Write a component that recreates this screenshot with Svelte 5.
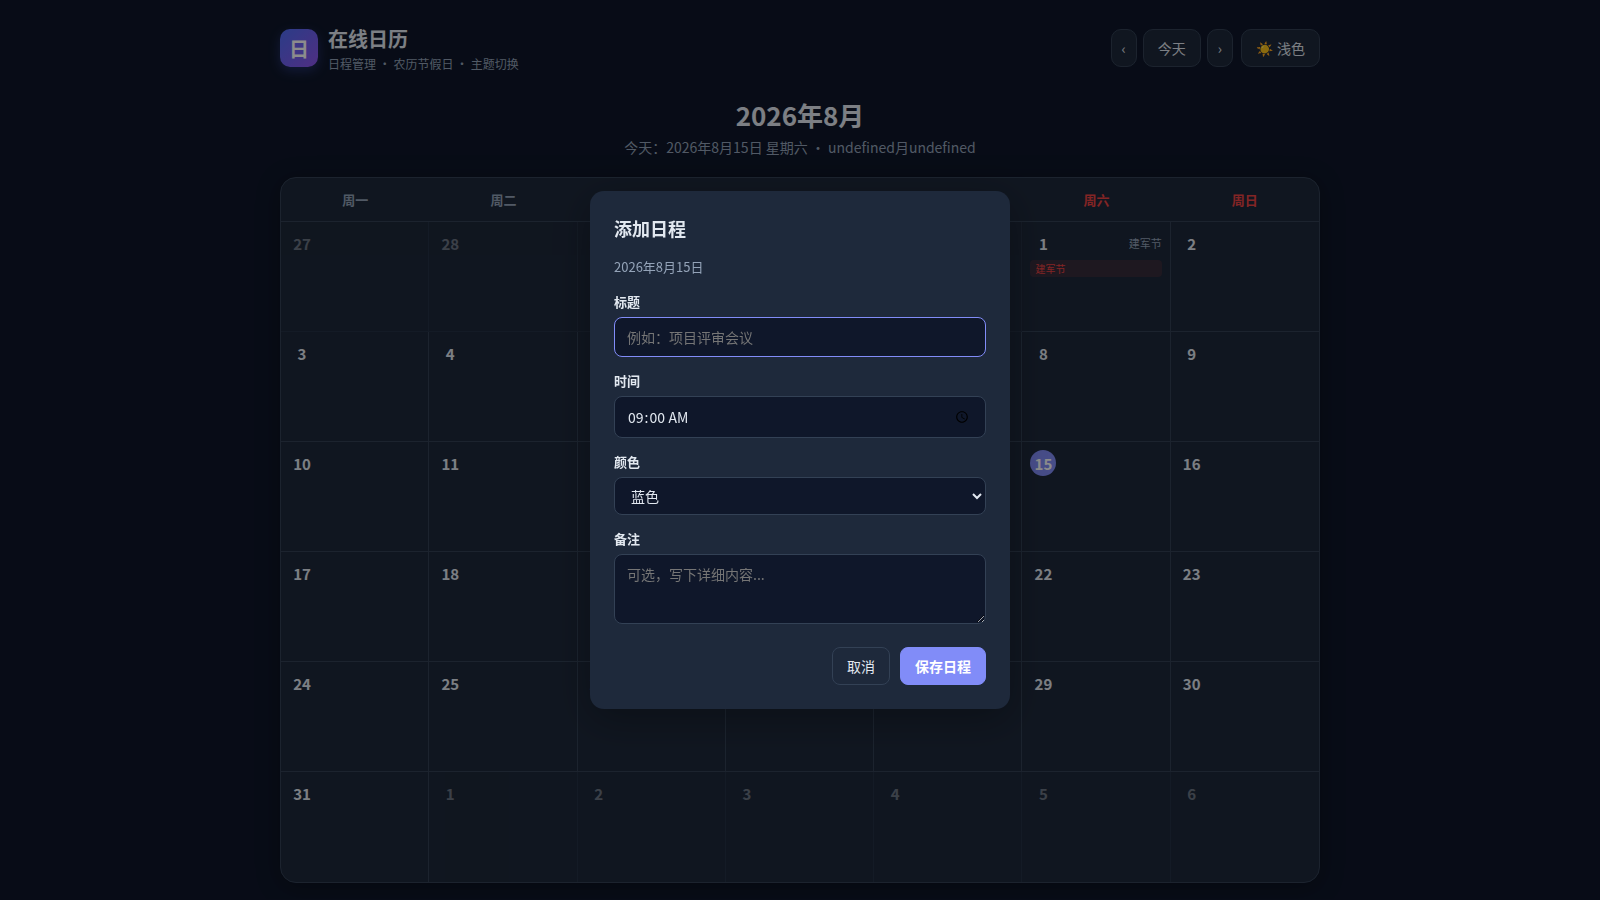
<script lang="ts">
  interface Day {
    date: number;
    month: number;
    outside: boolean;
    today: boolean;
    holiday?: string;
  }

  const weekdays = ["周一", "周二", "周三", "周四", "周五", "周六", "周日"];
  const holidays: Record<string, string> = { "8-1": "建军节" };
  const colors = [
    { value: "blue", label: "蓝色" },
    { value: "green", label: "绿色" },
    { value: "orange", label: "橙色" },
    { value: "red", label: "红色" },
  ];

  const year = 2026;
  const month = 8;
  const today = 15;

  const buildDays = (): Day[] => {
    const offset = (new Date(year, month - 1, 1).getDay() + 6) % 7;
    return Array.from({ length: 42 }, (_, i) => {
      const d = new Date(year, month - 1, 1 - offset + i);
      const m = d.getMonth() + 1;
      return {
        date: d.getDate(),
        month: m,
        outside: m !== month,
        today: m === month && d.getDate() === today,
        holiday: holidays[`${m}-${d.getDate()}`],
      };
    });
  };

  const days = buildDays();

  let open = $state(true);
  let title = $state("");
  let time = $state("09:00");
  let color = $state("blue");
  let note = $state("");

  const close = () => (open = false);
  const focus = (node: HTMLInputElement) => node.focus();

  const save = (e: SubmitEvent) => {
    e.preventDefault();
    close();
  };
</script>

<div class="app">
  <header>
    <div class="brand">
      <div class="logo">日</div>
      <div>
        <h1>在线日历</h1>
        <p>日程管理 · 农历节假日 · 主题切换</p>
      </div>
    </div>
    <div class="actions">
      <nav>
        <button class="btn arrow" aria-label="上个月">‹</button>
        <button class="btn">今天</button>
        <button class="btn arrow" aria-label="下个月">›</button>
      </nav>
      <button class="btn theme"><span>☀️</span>浅色</button>
    </div>
  </header>

  <div class="month">
    <h2>{year}年{month}月</h2>
    <p>今天：{year}年{month}月{today}日 星期六 · undefined月undefined</p>
  </div>

  <main class="calendar">
    <div class="weekdays">
      {#each weekdays as name, i}
        <div class:weekend={i > 4}>{name}</div>
      {/each}
    </div>
    <div class="days">
      {#each days as day}
        <div class="day" class:outside={day.outside}>
          <div class="day-head">
            <span class="num" class:today={day.today}>{day.date}</span>
            {#if day.holiday}
              <span class="lunar">{day.holiday}</span>
            {/if}
          </div>
          {#if day.holiday}
            <div class="holiday">{day.holiday}</div>
          {/if}
        </div>
      {/each}
    </div>
  </main>
</div>

{#if open}
  <div class="overlay">
    <div class="modal" role="dialog" aria-modal="true" aria-labelledby="modal-title">
      <h3 id="modal-title">添加日程</h3>
      <p class="date">{year}年{month}月{today}日</p>
      <form onsubmit={save}>
        <div class="field">
          <label for="title">标题</label>
          <input id="title" type="text" placeholder="例如：项目评审会议" autocomplete="off" bind:value={title} use:focus />
        </div>
        <div class="field">
          <label for="time">时间</label>
          <input id="time" type="time" bind:value={time} />
        </div>
        <div class="field">
          <label for="color">颜色</label>
          <select id="color" bind:value={color}>
            {#each colors as c}
              <option value={c.value}>{c.label}</option>
            {/each}
          </select>
        </div>
        <div class="field">
          <label for="note">备注</label>
          <textarea id="note" placeholder="可选，写下详细内容..." bind:value={note}></textarea>
        </div>
        <div class="buttons">
          <button class="btn" type="button" onclick={close}>取消</button>
          <button class="btn primary" type="submit">保存日程</button>
        </div>
      </form>
    </div>
  </div>
{/if}

<style>
  :global(:root) {
    --bg: #0f172a;
    --card: #1e293b;
    --text: #e2e8f0;
    --muted: #94a3b8;
    --border: #334155;
    --primary: #818cf8;
    --red: #ef4444;
  }

  :global(body) {
    margin: 0;
    background: var(--bg);
    color: var(--text);
    font-family: "Noto Sans CJK SC", sans-serif;
  }

  h1,
  h2,
  h3,
  p {
    margin: 0;
  }

  .app {
    box-sizing: border-box;
    max-width: 1080px;
    margin: 0 auto;
    padding: 24px 20px 16px;
  }

  header {
    display: flex;
    align-items: center;
    justify-content: space-between;
    margin-bottom: 24px;
  }

  .brand {
    display: flex;
    align-items: center;
    gap: 10px;

    & h1 {
      font-size: 20px;
      font-weight: 700;
    }
    & p {
      margin-top: 2px;
      font-size: 12px;
      color: var(--muted);
    }
  }

  .logo {
    display: flex;
    align-items: center;
    justify-content: center;
    width: 38px;
    height: 38px;
    border-radius: 10px;
    background: linear-gradient(135deg, #4f6ef7, #9055ee);
    box-shadow: 0 4px 12px rgba(79, 110, 247, 0.3);
    color: #fff;
    font-size: 20px;
    font-weight: 700;
  }

  .actions {
    display: flex;
    gap: 8px;

    & nav {
      display: flex;
      gap: 6px;
    }
  }

  .btn {
    padding: 8px 14px;
    border: 1px solid var(--border);
    border-radius: 10px;
    background: var(--card);
    color: var(--text);
    font-family: inherit;
    font-size: 14px;
    cursor: pointer;

    &.arrow {
      padding-inline: 10px;
    }
    &.theme {
      display: flex;
      align-items: center;
      gap: 4px;
    }
    &.primary {
      border-color: var(--primary);
      background: var(--primary);
      color: #fff;
      font-weight: 600;
    }
  }

  .month {
    margin-bottom: 20px;
    text-align: center;

    & h2 {
      font-size: 26px;
      font-weight: 700;
    }
    & p {
      margin-top: 4px;
      font-size: 14px;
      color: var(--muted);
    }
  }

  .calendar {
    overflow: hidden;
    border: 1px solid var(--border);
    border-radius: 16px;
    background: var(--card);
    box-shadow: 0 4px 24px rgba(0, 0, 0, 0.3);
  }

  .weekdays,
  .days {
    display: grid;
    grid-template-columns: repeat(7, 1fr);
  }

  .weekdays {
    border-bottom: 1px solid var(--border);

    & div {
      padding: 12px 0;
      text-align: center;
      font-size: 13px;
      font-weight: 600;
      color: var(--muted);
    }
    & .weekend {
      color: var(--red);
    }
  }

  .day {
    box-sizing: border-box;
    min-width: 0;
    min-height: 110px;
    padding: 8px;
    border-right: 1px solid var(--border);
    border-bottom: 1px solid var(--border);

    &:nth-child(7n) {
      border-right: none;
    }
    &:nth-last-child(-n + 7) {
      border-bottom: none;
    }
    &.outside {
      opacity: 0.4;
    }
  }

  .day-head {
    display: flex;
    align-items: center;
    justify-content: space-between;
    margin-bottom: 4px;
  }

  .num {
    display: flex;
    align-items: center;
    justify-content: center;
    width: 26px;
    height: 26px;
    border-radius: 50%;
    font-size: 15px;
    font-weight: 600;

    &.today {
      background: var(--primary);
      color: #fff;
    }
  }

  .lunar {
    font-size: 11px;
    color: var(--muted);
  }

  .holiday {
    padding: 1px 5px;
    border-radius: 4px;
    background: rgba(239, 68, 68, 0.12);
    font-size: 10px;
    color: var(--red);
  }

  .overlay {
    position: fixed;
    inset: 0;
    display: flex;
    align-items: center;
    justify-content: center;
    background: rgba(0, 0, 0, 0.45);
  }

  .modal {
    box-sizing: border-box;
    width: 90%;
    max-width: 420px;
    padding: 24px;
    border-radius: 14px;
    background: var(--card);
    box-shadow: 0 10px 40px rgba(0, 0, 0, 0.3);

    & h3 {
      margin-bottom: 16px;
      font-size: 18px;
      font-weight: 700;
    }
    & .date {
      margin-bottom: 16px;
      font-size: 13px;
      color: var(--muted);
    }
  }

  .field {
    margin-bottom: 14px;

    & label {
      display: block;
      margin-bottom: 6px;
      font-size: 13px;
      font-weight: 600;
    }
    & input,
    & select,
    & textarea {
      display: block;
      box-sizing: border-box;
      width: 100%;
      padding: 9px 12px;
      border: 1px solid var(--border);
      border-radius: 8px;
      outline: none;
      background: var(--bg);
      color: var(--text);
      font-family: inherit;
      font-size: 14px;

      &:focus {
        border-color: var(--primary);
      }
    }
    & select {
      padding-block: 7px;
    }
    & textarea {
      min-height: 70px;
      resize: vertical;
    }
  }

  .buttons {
    display: flex;
    justify-content: flex-end;
    gap: 10px;
    margin-top: 23px;

    & .btn {
      border-radius: 8px;
    }
  }
</style>
